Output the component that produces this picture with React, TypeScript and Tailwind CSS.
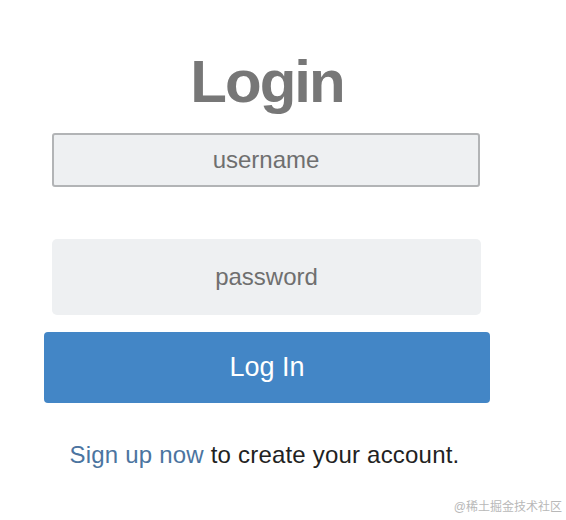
export default function App() {
  const font = { fontFamily: '"Liberation Sans", Arial, sans-serif' };
  return (
    <div className="relative w-[566px] h-[520px] bg-white overflow-hidden" style={font}>
      <div className="flex flex-col w-[446px] ml-[44px] pt-[52px]">
        <h1 className="text-center text-[60px] leading-[60px] font-bold tracking-[-2px] text-[#777777]">Login</h1>
        <div className="mt-[21px] ml-[8px] w-[428px] h-[54px] border-2 border-[#b2b4b6] rounded-[3px] bg-[#eef0f2] flex items-center justify-center text-[24px] text-[#6f6f6f]">
          username
        </div>
        <div className="mt-[52px] ml-[8px] w-[429px] h-[76px] rounded-[5px] bg-[#eef0f2] flex items-center justify-center text-[24px] text-[#6f6f6f]">
          password
        </div>
        <div className="mt-[17px] w-[446px] h-[71px] rounded-[4px] bg-[#4386c6] flex items-center justify-center text-[27px] text-white">
          Log In
        </div>
        <p className="mt-[40px] pr-[5px] text-center text-[24px] leading-[24px] tracking-[0.2px] text-[#222222]">
          <span className="text-[#4b74a0]">Sign up now</span> to create your account.
        </p>
      </div>
      <div
        className="absolute right-[4px] top-[499px] text-[12px] leading-[16px] text-[#b8b8b8]"
        style={{ fontFamily: '"Liberation Sans", "Noto Sans CJK SC", sans-serif' }}
      >
        @稀土掘金技术社区
      </div>
    </div>
  );
}
